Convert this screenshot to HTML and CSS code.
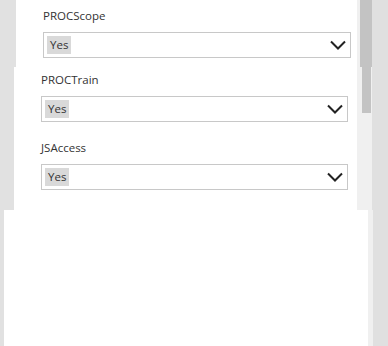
FILE: index.html
```html
<!DOCTYPE html>
<html>
<head>
<meta charset="utf-8">
<link rel="stylesheet" href="styles.css">
</head>
<body>
<div class="page">
  <div class="strip strip-top">
    <div class="gutter gutter-top"></div>
    <div class="panel panel-top">
      <div class="field">
        <div class="label">PROCScope</div>
        <div class="select select-top">
          <span class="chip">Yes</span>
          <svg class="chev" width="16" height="10" viewBox="0 0 16 10"><polyline points="1,1.5 8,8.5 15,1.5" fill="none" stroke="#222" stroke-width="2"/></svg>
        </div>
      </div>
    </div>
    <div class="rail rail-top">
      <div class="track track-top"><div class="thumb thumb-top"></div></div>
      <div class="outer"></div>
    </div>
  </div>

  <div class="strip strip-mid">
    <div class="gutter gutter-mid"></div>
    <div class="panel panel-mid">
      <div class="field">
        <div class="label">PROCTrain</div>
        <div class="select">
          <span class="chip">Yes</span>
          <svg class="chev" width="16" height="10" viewBox="0 0 16 10"><polyline points="1,1.5 8,8.5 15,1.5" fill="none" stroke="#222" stroke-width="2"/></svg>
        </div>
      </div>
      <div class="field field-gap">
        <div class="label">JSAccess</div>
        <div class="select">
          <span class="chip">Yes</span>
          <svg class="chev" width="16" height="10" viewBox="0 0 16 10"><polyline points="1,1.5 8,8.5 15,1.5" fill="none" stroke="#222" stroke-width="2"/></svg>
        </div>
      </div>
    </div>
    <div class="rail rail-mid">
      <div class="track track-mid"><div class="thumb thumb-mid"></div></div>
      <div class="outer"></div>
    </div>
  </div>

  <div class="strip strip-bottom">
    <div class="gutter gutter-bottom"></div>
    <div class="panel panel-bottom"></div>
    <div class="rail rail-bottom">
      <div class="track track-bottom"></div>
      <div class="outer"></div>
    </div>
  </div>
</div>
</body>
</html>
```

FILE: styles.css
```css
html, body {
  margin: 0;
  padding: 0;
  background: #e1e1e1;
}
.page {
  width: 388px;
  height: 346px;
  display: flex;
  flex-direction: column;
  font-family: "Open Sans", "Noto Sans", sans-serif;
  color: #333;
  overflow: hidden;
}
.strip {
  display: flex;
  flex-direction: row;
}
.strip-top { height: 67px; }
.strip-mid { height: 143px; }
.strip-bottom { flex: 1; }

.gutter { background: #e1e1e1; }
.gutter-top { width: 16px; }
.gutter-mid { width: 14px; }
.gutter-bottom { width: 4px; }

.panel { background: #fff; }
.panel-top { width: 341px; padding: 8px 0 0 27px; box-sizing: border-box; }
.panel-mid { width: 343px; padding: 5px 0 0 27px; box-sizing: border-box; }
.panel-bottom { width: 364px; }

.rail { flex: 1; display: flex; flex-direction: row; }
.track { background: #f0f0f0; }
.track-top { width: 15px; }
.track-mid { width: 15px; }
.track-bottom { width: 5px; }
.outer { flex: 1; background: #e0e0e0; }

.thumb { background: #c3c3c3; }
.thumb-top { margin-left: 3px; width: 12px; height: 67px; }
.thumb-mid { margin-left: 5px; width: 9px; height: 46px; }

.field { display: flex; flex-direction: column; }
.field-gap { margin-top: 18px; }

.label {
  font-size: 11.5px;
  line-height: 16px;
  height: 16px;
  margin-bottom: 8px;
  color: #333;
}
.select {
  width: 307px;
  height: 26px;
  box-sizing: border-box;
  border: 1px solid #c8c8c8;
  display: flex;
  flex-direction: row;
  align-items: center;
  justify-content: space-between;
  padding: 0 4px 0 3px;
}
.select-top { width: 308px; }
.chip {
  background: #d9d9d9;
  font-size: 11.5px;
  line-height: 18px;
  height: 18px;
  padding: 0 3px;
  color: #333;
}
.chev { display: block; }
```
